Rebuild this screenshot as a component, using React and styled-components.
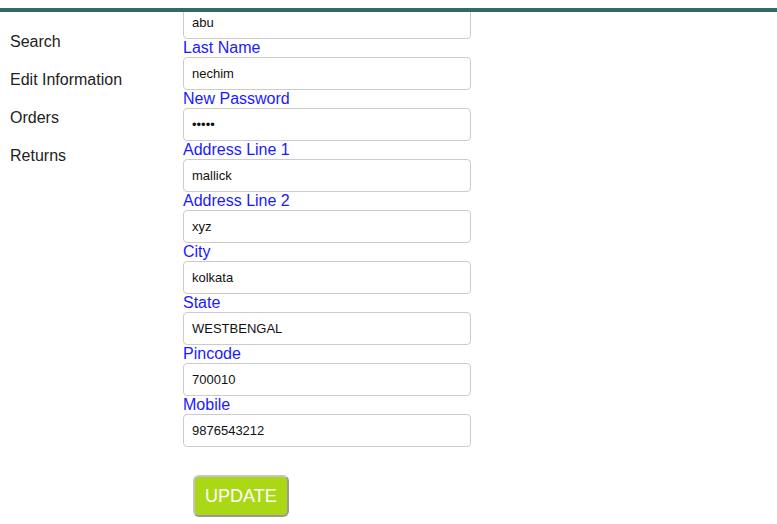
import React, { useEffect, useRef } from 'react'
import styled, { createGlobalStyle } from 'styled-components'

const GlobalStyle = createGlobalStyle`
  html, body {
    margin: 0;
    padding: 0;
    background: #fff;
    font-family: "Liberation Sans", Arial, sans-serif;
    overflow: hidden;
  }
`

const Page = styled.div`
  height: 100vh;
  padding-top: 8px;
  box-sizing: border-box;
  display: flex;
  flex-direction: column;
`

const TopBar = styled.div`
  height: 4px;
  background-color: #356864;
  flex: none;
`

const Body = styled.div`
  flex: 1;
  min-height: 0;
  display: grid;
  grid-template-columns: 183px 1fr;
`

const SideMenu = styled.nav`
  padding: 11px 0 0 10px;
  display: flex;
  flex-direction: column;
`

const MenuItem = styled.a`
  height: 38px;
  line-height: 38px;
  font-size: 16px;
  color: #222;
  text-decoration: none;
  cursor: pointer;
`

const FormScroll = styled.div`
  position: relative;
  overflow-y: auto;
  scrollbar-width: none;
  &::-webkit-scrollbar { display: none; }
`

const Form = styled.form`
  width: 288px;
  padding: 0 0 20px;
  display: flex;
  flex-direction: column;
`

const Label = styled.label`
  height: 18px;
  line-height: 18px;
  font-size: 16px;
  color: #1a1aff;
`

const Input = styled.input`
  box-sizing: border-box;
  width: 100%;
  height: 33px;
  margin: 0;
  padding: 0 8px;
  border: 1px solid #cccccc;
  border-radius: 4px;
  font-family: "Liberation Sans", Arial, sans-serif;
  font-size: 13px;
  color: #111;
  background: #fff;
  outline: none;
`

const UpdateButton = styled.button`
  align-self: flex-start;
  margin: 28px 0 0 10px;
  height: 42px;
  padding: 0 10px;
  border: 2px solid #9a9a9a;
  border-top-color: #c4c4c4;
  border-left-color: #c4c4c4;
  border-radius: 6px;
  background-color: #aad815;
  color: #fff;
  font-family: "Liberation Sans", Arial, sans-serif;
  font-size: 18px;
  cursor: pointer;
`

const fields = [
  { label: 'First Name', value: 'abu', hidden: true },
  { label: 'Last Name', value: 'nechim' },
  { label: 'New Password', value: '12345', type: 'password' },
  { label: 'Address Line 1', value: 'mallick' },
  { label: 'Address Line 2', value: 'xyz' },
  { label: 'City', value: 'kolkata' },
  { label: 'State', value: 'WESTBENGAL' },
  { label: 'Pincode', value: '700010' },
  { label: 'Mobile', value: '9876543212' },
]

const menu = ['Search', 'Edit Information', 'Orders', 'Returns']

function App() {
  const scrollRef = useRef(null)

  useEffect(() => {
    // page is shown scrolled so the first input sits partly under the bar
    if (scrollRef.current) scrollRef.current.scrollTop = 6
  }, [])

  return (
    <>
      <GlobalStyle />
      <Page>
        <TopBar />
        <Body>
          <SideMenu>
            {menu.map((item) => <MenuItem key={item}>{item}</MenuItem>)}
          </SideMenu>
          <FormScroll ref={scrollRef}>
            <Form onSubmit={(e) => e.preventDefault()}>
              {fields.map((f, ind) => (
                <React.Fragment key={`field_${ind}`}>
                  {!f.hidden && <Label>{f.label}</Label>}
                  <Input
                    aria-label={f.label}
                    type={f.type || 'text'}
                    defaultValue={f.value}
                  />
                </React.Fragment>
              ))}
              <UpdateButton type="submit">UPDATE</UpdateButton>
            </Form>
          </FormScroll>
        </Body>
      </Page>
    </>
  )
}

export default App
